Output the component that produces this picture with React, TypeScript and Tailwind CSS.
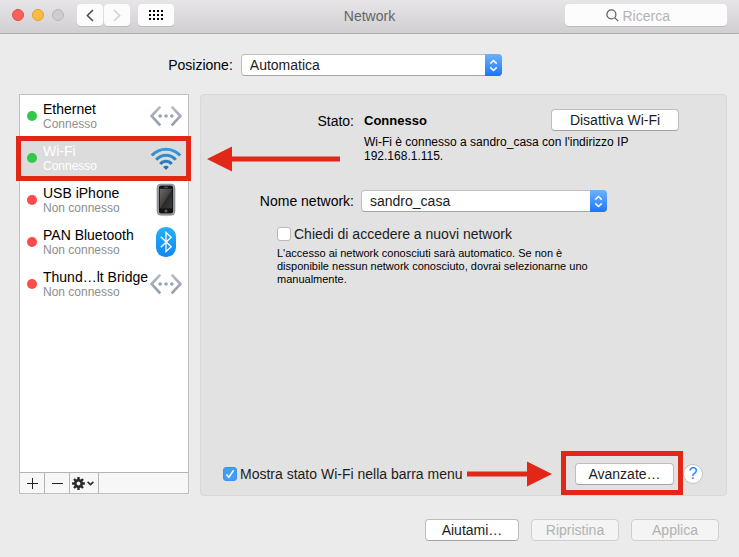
import React from "react";

type Kind = "wired" | "wifi" | "phone" | "bluetooth";

interface Service {
  name: string;
  status: string;
  connected: boolean;
  kind: Kind;
  selected?: boolean;
}

const services: Service[] = [
  { name: "Ethernet", status: "Connesso", connected: true, kind: "wired" },
  { name: "Wi-Fi", status: "Connesso", connected: true, kind: "wifi", selected: true },
  { name: "USB iPhone", status: "Non connesso", connected: false, kind: "phone" },
  { name: "PAN Bluetooth", status: "Non connesso", connected: false, kind: "bluetooth" },
  { name: "Thund…lt Bridge", status: "Non connesso", connected: false, kind: "wired" },
];

function ServiceIcon({ kind }: { kind: Kind }) {
  if (kind === "wifi") {
    return (
      <svg width="32" height="32" viewBox="0 0 32 32" fill="none" aria-hidden="true">
        <defs>
          <linearGradient id="wave" x1="0" y1="5" x2="0" y2="28" gradientUnits="userSpaceOnUse">
            <stop offset="0" stopColor="#3da0e4" />
            <stop offset="1" stopColor="#1c6cb4" />
          </linearGradient>
        </defs>
        <g stroke="url(#wave)" strokeWidth="3">
          <path d="M1.8 13.6C9.5 5 22.5 5 30.2 13.6" />
          <path d="M6.2 17.800C11.700 11.800 20.300 11.800 25.800 17.800" />
          <path d="M10.300 21.900C13.500 18.300 18.500 18.300 21.700 21.900" />
        </g>
        <path d="M13.200 25C14.700 23.400 17.300 23.400 18.800 25L16 28Z" fill="#1f70b8" />
      </svg>
    );
  }
  if (kind === "phone") {
    return (
      <svg width="32" height="34" viewBox="0 0 32 34" aria-hidden="true">
        <defs>
          <linearGradient id="glass" x1="0" y1="0" x2="1" y2="1">
            <stop offset="0" stopColor="#6a6a6a" />
            <stop offset="0.5" stopColor="#424242" />
            <stop offset="0.52" stopColor="#2a2a2a" />
            <stop offset="1" stopColor="#3a3a3a" />
          </linearGradient>
        </defs>
        <ellipse cx="16" cy="31.800" rx="9" ry="1.500" fill="#d6d6d6" />
        <rect x="7.200" y="1.200" width="17.600" height="30.600" rx="3.500" fill="#b4b8bd" stroke="#5b5e62" strokeWidth="0.700" />
        <rect x="8.800" y="2.600" width="14.400" height="27.800" rx="2.200" fill="#111315" />
        <rect x="9.800" y="5.800" width="12.400" height="19.600" fill="url(#glass)" />
        <rect x="14" y="3.800" width="4" height="0.800" fill="#6c6c6c" />
        <rect x="15.100" y="27.100" width="1.800" height="1.800" rx="0.400" fill="none" stroke="#a8a8a8" strokeWidth="0.600" />
      </svg>
    );
  }
  if (kind === "bluetooth") {
    return (
      <svg width="32" height="32" viewBox="0 0 32 32" aria-hidden="true">
        <defs>
          <linearGradient id="blue" x1="0" y1="0" x2="0" y2="1">
            <stop offset="0" stopColor="#26b0f8" />
            <stop offset="1" stopColor="#1187f5" />
          </linearGradient>
        </defs>
        <rect x="6" y="1" width="20" height="30" rx="9.500" fill="url(#blue)" />
        <path d="M10.800 10.800L21.200 20.800L16 25.600V6.400L21.200 11.200L10.800 21.200" fill="none" stroke="#fff" strokeWidth="1.300" />
      </svg>
    );
  }
  return (
    <svg width="32" height="32" viewBox="0 0 32 32" fill="none" aria-hidden="true">
      <defs>
        <linearGradient id="steel" x1="0" y1="6" x2="0" y2="26" gradientUnits="userSpaceOnUse">
          <stop offset="0" stopColor="#b9bec6" />
          <stop offset="1" stopColor="#8f99a8" />
        </linearGradient>
      </defs>
      <path d="M10.300 6.700L1.600 16L10.300 25.300M21.700 6.700L30.400 16L21.700 25.300" stroke="url(#steel)" strokeWidth="2.600" />
      <g fill="#99a2b1">
        <circle cx="10.200" cy="16" r="1.800" />
        <circle cx="16" cy="16" r="1.800" />
        <circle cx="21.800" cy="16" r="1.800" />
      </g>
    </svg>
  );
}

function PopUp({ id, value, className }: { id: string; value: string; className: string }) {
  return (
    <div className={`relative h-[22px] ${className}`}>
      <select
        id={id}
        defaultValue={value}
        className="h-full w-full appearance-none rounded border border-[#bfbfbf] border-b-[#a5a5a5] bg-white pl-2 pr-6 leading-5 text-[#1c1c1c]"
      >
        <option>{value}</option>
      </select>
      <span className="pointer-events-none absolute inset-y-0 right-0 flex w-[17px] items-center justify-center rounded-r bg-linear-to-b from-[#6bb2fa] to-[#1575fd]">
        <svg width="9" height="13" viewBox="0 0 9 13" fill="none" stroke="#fff" strokeWidth="1.500" aria-hidden="true">
          <path d="M1.300 4.600L4.500 1.500L7.700 4.600M1.300 8.400L4.500 11.500L7.700 8.400" />
        </svg>
      </span>
    </div>
  );
}

function Check({ id, label, checked }: { id: string; label: string; checked?: boolean }) {
  return (
    <div className="flex items-center gap-[3px]">
      <span className="relative block size-[14px]">
        <input
          id={id}
          type="checkbox"
          defaultChecked={checked}
          className="peer block size-[14px] appearance-none rounded-[3px] border border-[#b9b9b9] bg-white checked:border-[#3b92f6] checked:bg-[#439cf9]"
        />
        <svg
          className="pointer-events-none absolute inset-0 hidden peer-checked:block"
          width="14"
          height="14"
          viewBox="0 0 14 14"
          fill="none"
          stroke="#fff"
          strokeWidth="1.600"
          aria-hidden="true"
        >
          <path d="M3.400 7.500L5.900 10.300L10.500 3.400" />
        </svg>
      </span>
      <label htmlFor={id} className="whitespace-nowrap text-[#1c1c1c]">
        {label}
      </label>
    </div>
  );
}

function PushButton({ children, className, disabled }: { children: React.ReactNode; className: string; disabled?: boolean }) {
  return (
    <button
      type="button"
      disabled={disabled}
      className={`h-[22px] rounded border border-[#bdbdbd] border-b-[#a3a3a3] bg-white text-center leading-5 text-[#1c1c1c] disabled:border-[#cfcfcf] disabled:bg-[#f4f4f4] disabled:text-[#b2b2b2] ${className}`}
    >
      {children}
    </button>
  );
}

function TitleBar() {
  const tool = "flex h-[22px] items-center justify-center rounded bg-[#fcfcfc] shadow-[0_1px_0_#bcbabc]";
  return (
    <header className="grid h-[34px] grid-cols-[1fr_auto_1fr] items-start border-b border-[#b0aeb0] bg-linear-to-b from-[#e7e5e7] to-[#d1cfd1] px-3 pt-1">
      <div className="flex items-center">
        <div className="flex gap-2">
          <button type="button" aria-label="Chiudi" className="size-3 rounded-full border border-[#e24a46] bg-[#fc605c]" />
          <button type="button" aria-label="Riduci" className="size-3 rounded-full border border-[#dfa036] bg-[#fdbc40]" />
          <button type="button" aria-label="Ingrandisci" disabled className="size-3 rounded-full border border-[#b8b6b8] bg-[#cecdce]" />
        </div>
        <button type="button" aria-label="Indietro" className={`ml-[13px] w-[26px] ${tool}`}>
          <svg width="8" height="13" viewBox="0 0 8 13" fill="none" stroke="#4c4c4c" strokeWidth="1.600">
            <path d="M7 1L1.400 6.500L7 12" />
          </svg>
        </button>
        <button type="button" aria-label="Avanti" disabled className={`ml-px w-[26px] ${tool}`}>
          <svg width="8" height="13" viewBox="0 0 8 13" fill="none" stroke="#d2d2d2" strokeWidth="1.600">
            <path d="M1 1L6.600 6.500L1 12" />
          </svg>
        </button>
        <button type="button" aria-label="Mostra tutte" className={`ml-2 w-9 ${tool}`}>
          <svg width="14" height="10" viewBox="0 0 14 10" fill="#000" shapeRendering="crispEdges">
            {[0, 4, 8].map((y) => [0, 4, 8, 12].map((x) => <rect key={`${x}-${y}`} x={x} y={y} width="2" height="2" />))}
          </svg>
        </button>
      </div>
      <h1 className="leading-6 text-[#656465]">Network</h1>
      <label className={`w-[162px] justify-self-end pl-3 ${tool}`}>
        <svg width="13" height="13" viewBox="0 0 13 13" fill="none" stroke="#5e5e5e" strokeWidth="1.200" aria-hidden="true">
          <circle cx="5.400" cy="5.400" r="4.500" />
          <path d="M8.700 8.700L12.200 12.200" />
        </svg>
        <input
          type="search"
          aria-label="Ricerca"
          placeholder="Ricerca"
          className="ml-1 h-[22px] w-[76px] bg-transparent pt-0.5 outline-none placeholder:text-[#b4b4b4]"
        />
      </label>
    </header>
  );
}

function ServiceList() {
  const cell = "flex items-center justify-center border-r border-[#b4b4b4]";
  return (
    <aside className="flex w-[170px] shrink-0 flex-col border border-[#c0c0c0] bg-white">
      <ul className="flex-1">
        {services.map((s) => (
          <li key={s.name} className={`relative flex h-[42px] items-center pl-[7px] ${s.selected ? "bg-[#dcdcdc] text-white" : "text-black"}`}>
            <span className={`size-[10px] shrink-0 rounded-full ${s.connected ? "bg-[#34c84a]" : "bg-[#fc4b4a]"}`} />
            <span className="ml-[6px] w-[107px] whitespace-nowrap">
              <span className="block leading-[15px]">{s.name}</span>
              <span className={`block text-[12px] leading-[14px] ${s.selected ? "text-white" : "text-[#8e8e8e]"}`}>{s.status}</span>
            </span>
            <span className="shrink-0">
              <ServiceIcon kind={s.kind} />
            </span>
            {s.selected && (
              <span className="pointer-events-none absolute -top-px -right-[3px] -bottom-0.5 -left-1 z-10 border-5 border-[#e12717]" />
            )}
          </li>
        ))}
      </ul>
      <div className="flex h-[21px] border-t border-[#b4b4b4] bg-[#f7f7f7]">
        <button type="button" aria-label="Aggiungi" className={`w-[25px] ${cell}`}>
          <svg width="11" height="11" viewBox="0 0 11 11" stroke="#222" strokeWidth="1">
            <path d="M0 5.500H11M5.500 0V11" />
          </svg>
        </button>
        <button type="button" aria-label="Rimuovi" className={`w-[25px] ${cell}`}>
          <svg width="11" height="11" viewBox="0 0 11 11" stroke="#222" strokeWidth="1">
            <path d="M0 5.500H11" />
          </svg>
        </button>
        <button type="button" aria-label="Azioni" className={`w-[29px] gap-0.5 pr-0.5 ${cell}`}>
          <svg width="13" height="13" viewBox="-6.500 -6.500 13 13" aria-hidden="true">
            {[0, 45, 90, 135].map((a) => (
              <path key={a} d="M0 -6.400V-3M0 3V6.400" stroke="#2a2a2a" strokeWidth="2.400" transform={`rotate(${a})`} />
            ))}
            <circle r="3.200" fill="none" stroke="#2a2a2a" strokeWidth="2.600" />
          </svg>
          <svg width="7" height="5" viewBox="0 0 7 5" fill="none" stroke="#2a2a2a" strokeWidth="1.600">
            <path d="M0.600 0.800L3.500 3.600L6.400 0.800" />
          </svg>
        </button>
      </div>
    </aside>
  );
}

export default function App() {
  return (
    <div className="flex min-h-screen flex-col bg-[#ebebeb] font-['Liberation_Sans',Arial,sans-serif] text-[14px] leading-4 text-black">
      <TitleBar />
      <div className="mt-5 flex items-center justify-center gap-2 pr-[69px]">
        <label htmlFor="location">Posizione:</label>
        <PopUp id="location" value="Automatica" className="w-[261px]" />
      </div>
      <main className="mt-[18px] flex flex-1 gap-[11px] pl-[19px] pr-3">
        <div className="flex pb-0.5">
          <ServiceList />
        </div>
        <section className="flex min-w-0 flex-1 flex-col rounded border border-[#d8d8d8] bg-[#e2e2e2] pt-3.5">
          <div className="grid grid-cols-[153px_1fr] gap-x-[10px]">
            <span className="pt-1 text-right">Stato:</span>
            <div className="flex items-start justify-between pr-[47px]">
              <strong className="pt-1 text-[13px] font-bold">Connesso</strong>
              <PushButton className="w-[128px]">Disattiva Wi-Fi</PushButton>
            </div>
            <p className="relative col-start-2 mt-1 max-w-[280px] text-[12px] leading-[14px]">
              Wi-Fi è connesso a sandro_casa con l'indirizzo IP 192.168.1.115.
              <svg
                className="pointer-events-none absolute top-[11px] right-full mr-6"
                width="133"
                height="26"
                viewBox="0 0 133 26"
                fill="#e12717"
                aria-hidden="true"
              >
                <path d="M0 13L25 0.500V10.500H133V15.500H25V25.500Z" />
              </svg>
            </p>
          </div>
          <div className="mt-[27px] flex items-center gap-[7px]">
            <label htmlFor="ssid" className="w-[153px] text-right">
              Nome network:
            </label>
            <PopUp id="ssid" value="sandro_casa" className="w-[246px]" />
          </div>
          <div className="mt-3.5 pl-[76px]">
            <Check id="ask" label="Chiedi di accedere a nuovi network" />
            <p className="mt-[5px] max-w-[320px] text-[11px] leading-[13px]">
              L'accesso ai network conosciuti sarà automatico. Se non è disponibile nessun network conosciuto, dovrai selezionarne uno manualmente.
            </p>
          </div>
          <div className="mt-auto flex items-center justify-between pr-[23px] pb-2.5 pl-[22px]">
            <Check id="menubar" label="Mostra stato Wi-Fi nella barra menu" checked />
            <div className="flex items-center gap-[9px]">
              <div className="relative">
                <PushButton className="block w-[99px]">Avanzate…</PushButton>
                <span className="pointer-events-none absolute -top-3 -right-[9px] -bottom-2.5 -left-3.5 border-5 border-[#e12717]" />
                <svg
                  className="pointer-events-none absolute -top-0.5 right-full mr-[23px]"
                  width="85"
                  height="26"
                  viewBox="0 0 85 26"
                  fill="#e12717"
                  aria-hidden="true"
                >
                  <path d="M85 13L60 0.500V10.500H0V15.500H60V25.500Z" />
                </svg>
              </div>
              <button type="button" aria-label="Aiuto" className="size-5 rounded-full border border-[#c2c2c2] bg-white text-center text-base leading-[18px] text-[#1a82fb]">
                ?
              </button>
            </div>
          </div>
        </section>
      </main>
      <footer className="flex justify-end gap-3 pt-[23px] pr-5 pb-4">
        <PushButton className="w-[94px]">Aiutami…</PushButton>
        <PushButton className="w-[88px]" disabled>
          Ripristina
        </PushButton>
        <PushButton className="w-[88px]" disabled>
          Applica
        </PushButton>
      </footer>
    </div>
  );
}
